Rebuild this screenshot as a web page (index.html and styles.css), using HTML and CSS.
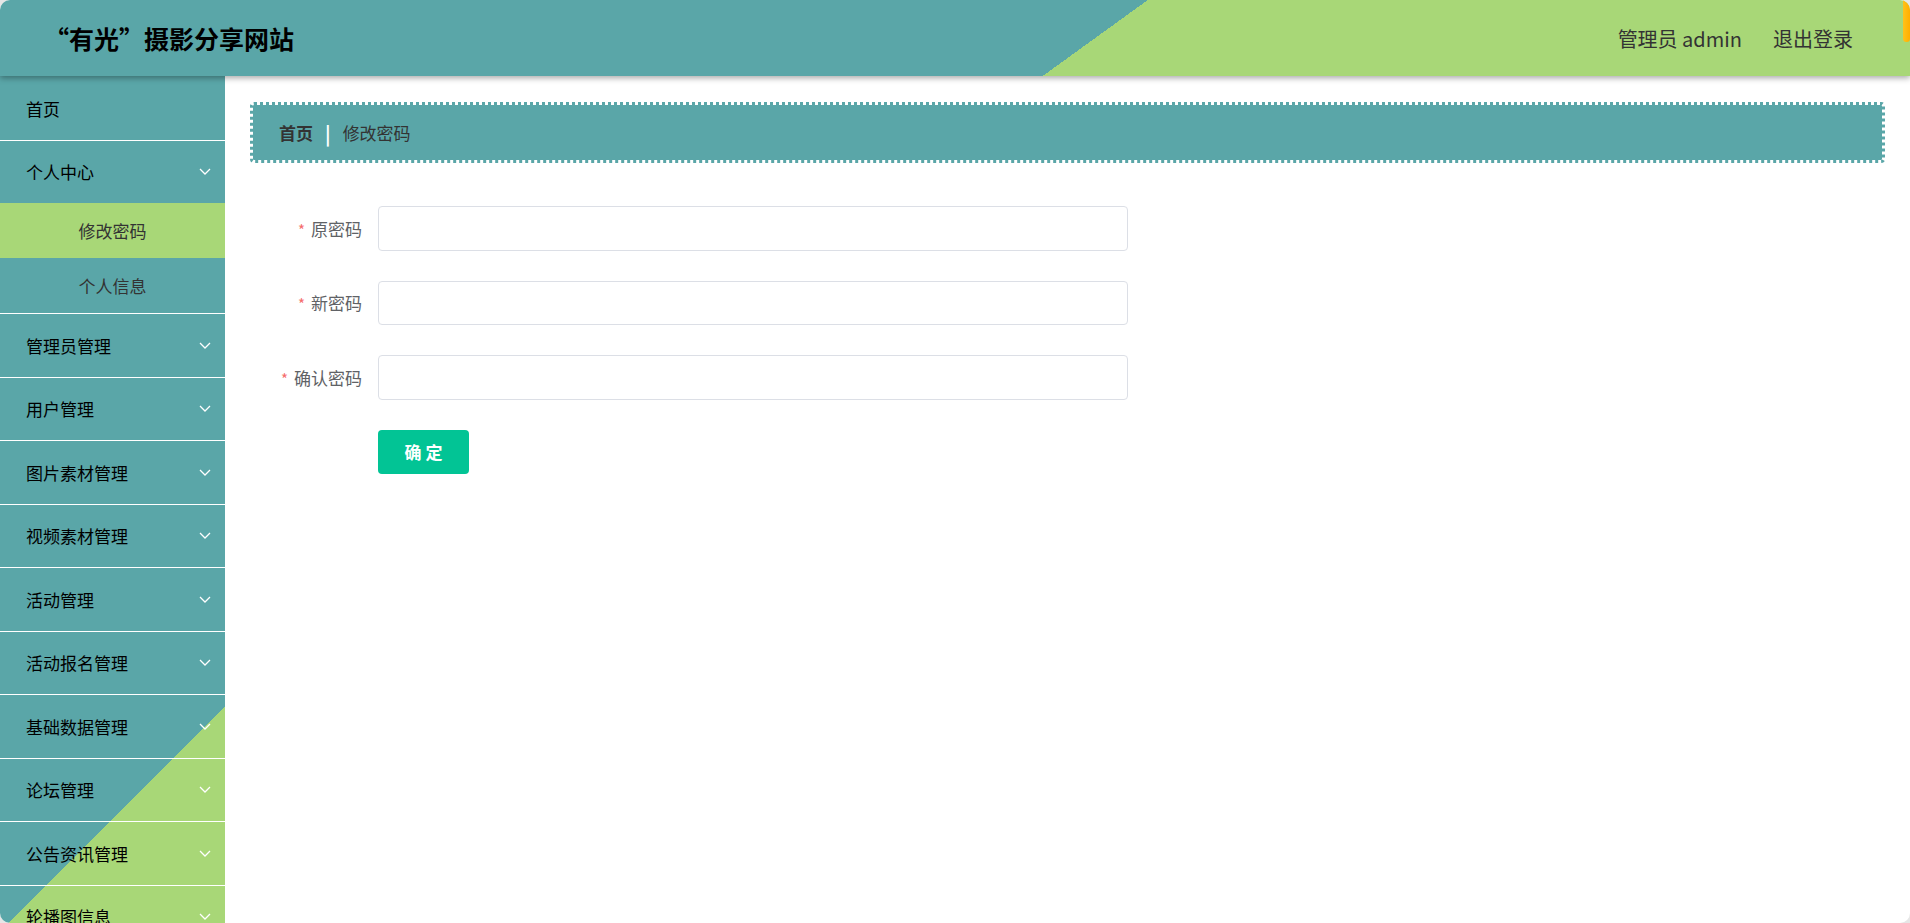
FILE: index.html
```html
<!DOCTYPE html>
<html lang="zh-CN">
<head>
<meta charset="utf-8">
<title>修改密码 - “有光”摄影分享网站</title>
<link rel="stylesheet" href="styles.css">
</head>
<body>
<div class="app">
  <header class="topbar">
    <h1 class="brand">“有光”摄影分享网站</h1>
    <div class="user-area">
      <span class="user-name">管理员 admin</span>
      <a class="logout">退出登录</a>
    </div>
    <span class="scroll-thumb"></span>
  </header>

  <div class="layout">
    <aside class="sidebar">
      <ul class="menu">
        <li class="menu-item"><div class="menu-title">首页</div></li>
        <li class="menu-item is-open">
          <div class="menu-title">个人中心
            <svg class="arrow" viewBox="0 0 12 7"><polyline points="1,1 6,6 11,1"/></svg>
          </div>
          <ul class="submenu">
            <li class="submenu-item is-active">修改密码</li>
            <li class="submenu-item">个人信息</li>
          </ul>
        </li>
        <li class="menu-item"><div class="menu-title">管理员管理<svg class="arrow" viewBox="0 0 12 7"><polyline points="1,1 6,6 11,1"/></svg></div></li>
        <li class="menu-item"><div class="menu-title">用户管理<svg class="arrow" viewBox="0 0 12 7"><polyline points="1,1 6,6 11,1"/></svg></div></li>
        <li class="menu-item"><div class="menu-title">图片素材管理<svg class="arrow" viewBox="0 0 12 7"><polyline points="1,1 6,6 11,1"/></svg></div></li>
        <li class="menu-item"><div class="menu-title">视频素材管理<svg class="arrow" viewBox="0 0 12 7"><polyline points="1,1 6,6 11,1"/></svg></div></li>
        <li class="menu-item"><div class="menu-title">活动管理<svg class="arrow" viewBox="0 0 12 7"><polyline points="1,1 6,6 11,1"/></svg></div></li>
        <li class="menu-item"><div class="menu-title">活动报名管理<svg class="arrow" viewBox="0 0 12 7"><polyline points="1,1 6,6 11,1"/></svg></div></li>
        <li class="menu-item"><div class="menu-title">基础数据管理<svg class="arrow" viewBox="0 0 12 7"><polyline points="1,1 6,6 11,1"/></svg></div></li>
        <li class="menu-item"><div class="menu-title">论坛管理<svg class="arrow" viewBox="0 0 12 7"><polyline points="1,1 6,6 11,1"/></svg></div></li>
        <li class="menu-item"><div class="menu-title">公告资讯管理<svg class="arrow" viewBox="0 0 12 7"><polyline points="1,1 6,6 11,1"/></svg></div></li>
        <li class="menu-item"><div class="menu-title">轮播图信息<svg class="arrow" viewBox="0 0 12 7"><polyline points="1,1 6,6 11,1"/></svg></div></li>
      </ul>
    </aside>

    <main class="content">
      <div class="breadcrumb">
        <span class="crumb crumb-home">首页</span>
        <span class="crumb-sep">|</span>
        <span class="crumb">修改密码</span>
      </div>

      <form class="pwd-form">
        <div class="form-row">
          <label class="form-label"><span class="required">*</span>原密码</label>
          <input class="form-input" type="password">
        </div>
        <div class="form-row">
          <label class="form-label"><span class="required">*</span>新密码</label>
          <input class="form-input" type="password">
        </div>
        <div class="form-row">
          <label class="form-label"><span class="required">*</span>确认密码</label>
          <input class="form-input" type="password">
        </div>
        <div class="form-row">
          <button class="btn-submit" type="button">确 定</button>
        </div>
      </form>
    </main>
  </div>
</div>
</body>
</html>
```

FILE: styles.css
```css
html, body {
  margin: 0;
  height: 100%;
  background: #e6e6e6;
}

body {
  font-family: "Noto Sans CJK SC", "Noto Sans", sans-serif;
}

ul {
  list-style: none;
  margin: 0;
  padding: 0;
}

.app {
  position: relative;
  height: 100vh;
  display: flex;
  flex-direction: column;
  background: #fff;
  border-radius: 10px;
  overflow: hidden;
}

/* ---------- top bar ---------- */
.topbar {
  position: relative;
  z-index: 2;
  flex: none;
  height: 76px;
  display: flex;
  align-items: center;
  justify-content: space-between;
  padding: 0 57px 0 44px;
  background: linear-gradient(144.1deg, #5aa6a8 673px, #a8d777 673px);
  box-shadow: 0 2px 6px rgba(0, 0, 0, 0.35);
}

.brand {
  margin: 0;
  font-size: 25px;
  font-weight: 700;
  color: #000;
  line-height: 1;
}

.user-area {
  display: flex;
  align-items: center;
  gap: 31px;
  font-size: 20px;
  color: #333;
}

.logout {
  cursor: pointer;
}

.scroll-thumb {
  position: absolute;
  top: 0;
  right: 0;
  width: 7px;
  height: 42px;
  border-radius: 0 0 4px 4px;
  background: linear-gradient(to right, #ffc21a, #ffae00);
}

/* ---------- layout ---------- */
.layout {
  flex: 1;
  min-height: 0;
  display: flex;
}

.sidebar {
  flex: none;
  width: 225px;
  padding-top: 1px;
  overflow: hidden;
  background: linear-gradient(135deg, #5aa6a8 605px, #a8d777 605px);
}

.menu-item {
  border-bottom: 1px solid #fff;
}

.menu-title {
  height: 62.5px;
  display: flex;
  align-items: center;
  justify-content: space-between;
  padding: 0 14px 0 26px;
  font-size: 17px;
  color: #000;
}

.arrow {
  width: 12px;
  height: 7px;
  fill: none;
  stroke: #fff;
  stroke-width: 1.3;
}

.submenu-item {
  height: 55px;
  line-height: 55px;
  text-align: center;
  font-size: 17px;
  color: #333;
}

.submenu-item.is-active {
  background: #a8d777;
}

/* ---------- content ---------- */
.content {
  flex: 1;
  min-width: 0;
  padding: 26px 25px;
}

.breadcrumb {
  box-sizing: border-box;
  height: 61px;
  display: flex;
  align-items: center;
  padding-left: 26px;
  background: #5aa6a8;
  background-clip: padding-box;
  border: 3px dotted #5aa6a8;
  border-radius: 4px;
  font-size: 17px;
  color: #333;
}

.crumb-home {
  font-weight: 700;
}

.crumb-sep {
  margin: 0 12px;
  color: #fff;
  font-weight: 700;
  font-size: 19px;
}

.pwd-form {
  margin-top: 43px;
}

.form-row {
  display: flex;
  align-items: center;
  margin-bottom: 30px;
}

.form-label {
  box-sizing: border-box;
  width: 128px;
  padding-right: 16px;
  text-align: right;
  font-size: 17px;
  color: #606266;
}

.required {
  color: #f56c6c;
  margin-right: 6px;
  font-size: 15px;
}

.form-input {
  box-sizing: border-box;
  width: 750px;
  height: 44.5px;
  border: 1px solid #dcdfe6;
  border-radius: 4px;
  background: #fff;
  outline: none;
}

.btn-submit {
  margin-left: 128px;
  width: 91px;
  height: 44px;
  border: none;
  border-radius: 4px;
  background: #02c495;
  color: #fff;
  font-family: inherit;
  font-size: 17px;
  font-weight: 700;
  cursor: pointer;
}
```
